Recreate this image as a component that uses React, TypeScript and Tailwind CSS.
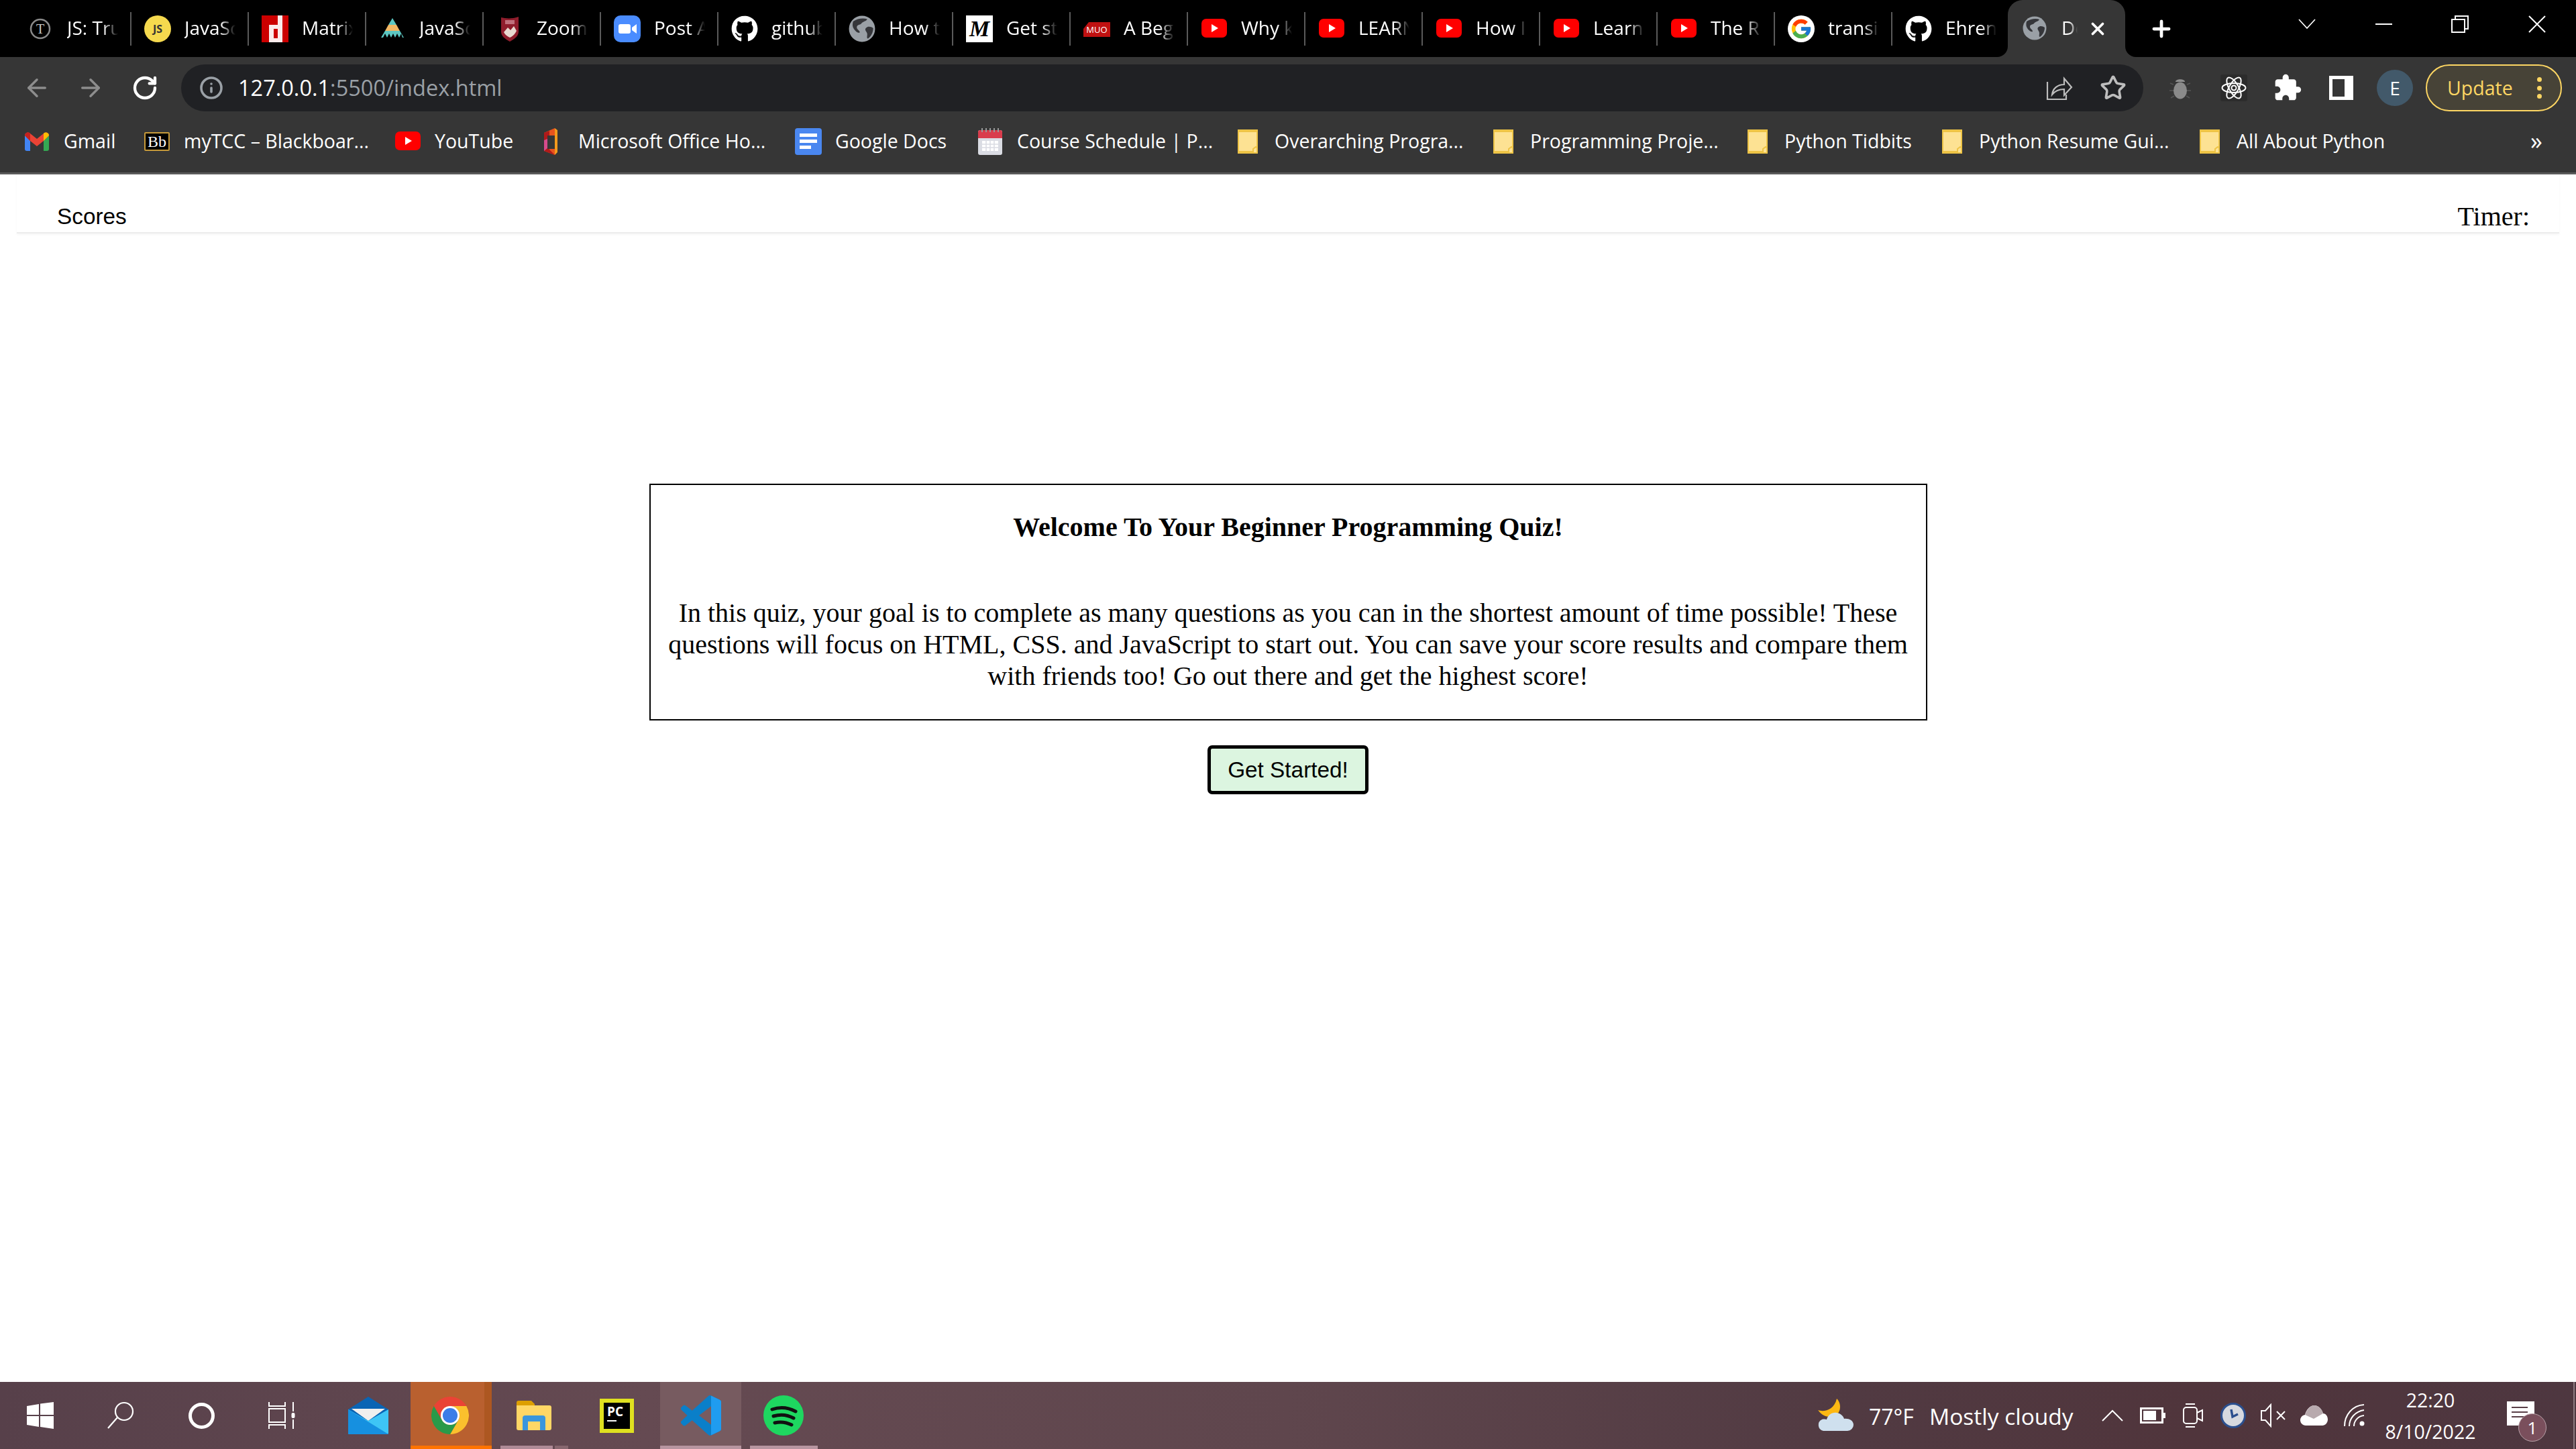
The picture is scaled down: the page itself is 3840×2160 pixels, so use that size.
import React from "react";
import { FaGithub } from "react-icons/fa";
import { MdExtension } from "react-icons/md";
import { FcGoogle } from "react-icons/fc";
import { ArrowLeft, ArrowRight, RotateCw, Info, Star, X, Plus } from "lucide-react";

const Globe = ({ size = 36 }: { size?: number }) => (
  <svg width={size} height={size} viewBox="0 0 36 36">
    <circle cx="18" cy="18" r="17.5" fill="#9aa0a6" />
    <path d="M6 8c6-4 14-5 19-3-1 3-6 3-8 6-2 2-6 1-6 5 0 3 4 4 4 7-3 1-6-2-8-5S5 12 6 8Z" fill="#35363a" />
    <path d="M33 17c-3-2-7-3-10 0-2 3 2 5 2 8 0 3-1 6 1 6 4-3 7-8 7-14Z" fill="#35363a" />
  </svg>
);

const YT = () => (
  <svg width="40" height="30" viewBox="0 0 40 30">
    <rect x="1" y="0" width="38" height="28" rx="7" fill="#ff0000" />
    <path d="M16 8l10 6-10 6Z" fill="#fff" />
  </svg>
);

const Folder = () => (
  <svg width="30" height="36" viewBox="0 0 30 36">
    <rect x="1" y="1" width="28" height="34" fill="#fde293" stroke="#eec446" strokeWidth="2" />
    <rect x="0" y="0" width="30" height="4" fill="#eec446" />
    <rect x="0" y="32" width="30" height="4" fill="#eec446" />
    <path d="M23 35v-6l4-3 2 1v8Z" fill="#fde293" stroke="#eec446" strokeWidth="2" />
  </svg>
);

const tabs: { t: string; i: React.ReactNode }[] = [
  {
    t: "JS: True or False",
    i: (
      <svg width="40" height="40" viewBox="0 0 40 40">
        <circle cx="20" cy="20" r="14" fill="none" stroke="#8a8a8a" strokeWidth="2.5" />
        <text x="20" y="27" textAnchor="middle" fontSize="20" fontFamily="Liberation Serif" fill="#c8c8c8">T</text>
      </svg>
    ),
  },
  {
    t: "JavaScript",
    i: (
      <svg width="40" height="40" viewBox="0 0 40 40">
        <circle cx="20" cy="20" r="20" fill="#f5d94e" />
        <text x="20" y="26" textAnchor="middle" fontSize="16" fontWeight="700" fontFamily="Open Sans" fill="#333">JS</text>
      </svg>
    ),
  },
  {
    t: "Matrix",
    i: (
      <svg width="40" height="40" viewBox="0 0 40 40">
        <rect width="40" height="40" fill="#cc0000" />
        <path d="M24 0h7v40H11V14h13Zm-6 20v14h6V20Z" fill="#fff" opacity="0.92" />
      </svg>
    ),
  },
  {
    t: "JavaScript",
    i: (
      <svg width="40" height="40" viewBox="0 0 40 40">
        <path d="M20 4l6 10H14Z" fill="#5cc7c2" />
        <path d="M14 14h12l5 9H9Z" fill="#f2b764" />
        <path d="M9 23h22l6 10H3Z" fill="#5cc7c2" />
        <path d="M6 33l3-6 3 6 3-6 3 6 3-6 3 6 3-6 3 6 3-6 2 6Z" fill="#000" />
      </svg>
    ),
  },
  {
    t: "Zoom",
    i: (
      <svg width="40" height="40" viewBox="0 0 40 40">
        <path d="M7 3c8 2 18 2 26-1v22c0 7-6 11-13 15C13 35 7 31 7 24Z" fill="#8f1d2c" />
        <path d="M11 25l6-7 4 4 5-6 4 7c-3 6-6 8-10 10-4-2-7-4-9-8Z" fill="#e8d9d0" />
        <rect x="13" y="7" width="14" height="6" fill="#c0707c" />
      </svg>
    ),
  },
  {
    t: "Post A",
    i: (
      <svg width="40" height="40" viewBox="0 0 40 40">
        <rect width="40" height="40" rx="10" fill="#4a8cff" />
        <rect x="7" y="13" width="18" height="14" rx="3" fill="#fff" />
        <path d="M27 18l7-5v14l-7-5Z" fill="#fff" />
      </svg>
    ),
  },
  { t: "github", i: <FaGithub size={40} color="#fff" /> },
  { t: "How to", i: <Globe size={40} /> },
  {
    t: "Get started",
    i: (
      <svg width="40" height="40" viewBox="0 0 40 40">
        <rect width="40" height="40" fill="#fff" />
        <text x="20" y="31" textAnchor="middle" fontSize="34" fontStyle="italic" fontWeight="700" fontFamily="Liberation Serif" fill="#000">M</text>
      </svg>
    ),
  },
  {
    t: "A Beginner",
    i: (
      <svg width="40" height="40" viewBox="0 0 40 40">
        <path d="M8 10h32v22H0v-12Z" fill="#bf1111" />
        <text x="20" y="26" textAnchor="middle" fontSize="13" fontFamily="Open Sans" fill="#fff">MUO</text>
      </svg>
    ),
  },
  { t: "Why k", i: <YT /> },
  { t: "LEARN", i: <YT /> },
  { t: "How I", i: <YT /> },
  { t: "Learn", i: <YT /> },
  { t: "The R", i: <YT /> },
  {
    t: "transition",
    i: (
      <span className="flex h-10 w-10 items-center justify-center rounded-full bg-white">
        <FcGoogle size={34} />
      </span>
    ),
  },
  { t: "Ehrenberg", i: <FaGithub size={40} color="#fff" /> },
];

const Gmail = () => (
  <svg width="36" height="28" viewBox="0 0 36 28">
    <path d="M0 5v20a3 3 0 0 0 3 3h5V13Z" fill="#4285f4" />
    <path d="M36 5v20a3 3 0 0 1-3 3h-5V13Z" fill="#34a853" />
    <path d="M8 13L0 5c0-4 5-6 8-3l10 8 10-8c3-3 8-1 8 3l-8 8-10 8Z" fill="#ea4335" />
    <path d="M28 2c3-3 8-1 8 3l-8 8Z" fill="#fbbc04" />
    <path d="M8 2C5-1 0 1 0 5l8 8Z" fill="#c5221f" />
  </svg>
);

const marks: { t: string; w: string; i: React.ReactNode }[] = [
  { t: "Gmail", w: "w-[179px]", i: <Gmail /> },
  {
    t: "myTCC – Blackboar...",
    w: "w-[374px]",
    i: (
      <span className="flex h-7 w-[38px] items-center justify-center rounded-[2px] border-2 border-[#c79a3a] bg-black font-['Liberation_Serif'] text-[24px] leading-none text-white">
        Bb
      </span>
    ),
  },
  { t: "YouTube", w: "w-[214px]", i: <YT /> },
  {
    t: "Microsoft Office Ho...",
    w: "w-[383px]",
    i: (
      <svg className="-translate-x-[3px]" width="32" height="40" viewBox="0 0 32 40">
        <path d="M8 7L24 0v40L8 34Z" fill="#e8541d" />
        <path d="M8 7l8-3v28l8 8-16-6Z" fill="#b01a1a" />
        <path d="M13 11h11v20H13Z" fill="#363636" />
        <path d="M8 18l5-2v14l-5 4Z" fill="#d64b8c" />
        <path d="M24 0l4 3v33l-4 4Z" fill="#f49a1c" />
      </svg>
    ),
  },
  {
    t: "Google Docs",
    w: "w-[271px]",
    i: (
      <svg width="40" height="40" viewBox="0 0 40 40">
        <rect width="40" height="40" rx="4" fill="#4a87f0" />
        <rect x="7" y="8" width="26" height="5" fill="#fff" />
        <rect x="7" y="17" width="26" height="5" fill="#fff" />
        <rect x="7" y="26" width="17" height="5" fill="#fff" />
      </svg>
    ),
  },
  {
    t: "Course Schedule | P...",
    w: "w-[384px]",
    i: (
      <svg width="36" height="40" viewBox="0 0 36 40">
        <rect y="3" width="36" height="37" rx="3" fill="#dadce3" />
        <path d="M0 6a3 3 0 0 1 3-3h30a3 3 0 0 1 3 3v9H0Z" fill="#d93c4c" />
        <path d="M6 0v6M12 0v6M18 0v6M24 0v6M30 0v6" stroke="#9a9a9a" strokeWidth="2" />
        <path d="M6 19h24v15H6Z" fill="#fff" />
        <path d="M12 19v15M18 19v15M24 19v15M6 24h24M6 29h24" stroke="#dadce3" strokeWidth="1.5" />
      </svg>
    ),
  },
  { t: "Overarching Progra...", w: "w-[381px]", i: <Folder /> },
  { t: "Programming Proje...", w: "w-[379px]", i: <Folder /> },
  { t: "Python Tidbits", w: "w-[290px]", i: <Folder /> },
  { t: "Python Resume Gui...", w: "w-[384px]", i: <Folder /> },
  { t: "All About Python", w: "w-[300px]", i: <Folder /> },
];

const Tab = ({ t, i }: { t: string; i: React.ReactNode }) => (
  <div className="flex h-full w-[175px] shrink-0 items-center">
    <div className="flex w-[40px] ml-[19px] justify-center">{i}</div>
    <div className="ml-[20px] w-[76px] -translate-y-[2px] overflow-hidden whitespace-nowrap text-[28px] leading-[36px] text-white [mask-image:linear-gradient(90deg,#000_70%,transparent_100%)]">
      {t}
    </div>
    <div className="ml-[18px] h-[50px] w-[2px] bg-[#5a5a5a]" />
  </div>
);

const Chrome = () => (
  <svg width="56" height="56" viewBox="0 0 48 48">
    <path d="M24 12H44.8A24 24 0 0 0 3.2 12L13.6 30A12 12 0 0 1 24 12Z" fill="#ea4335" />
    <path d="M44.8 12H24A12 12 0 0 1 34.4 30L24 48A24 24 0 0 0 44.8 12Z" fill="#fbc02d" />
    <path d="M3.2 12L13.6 30A12 12 0 0 0 34.4 30L24 48A24 24 0 0 1 3.2 12Z" fill="#2a9a49" />
    <circle cx="24" cy="24" r="12" fill="#fff" />
    <circle cx="24" cy="24" r="9.5" fill="#3b7de8" />
  </svg>
);

export default function App() {
  return (
    <div className="flex h-[2160px] w-[3840px] flex-col overflow-hidden bg-white font-['Open_Sans',sans-serif]">
      {/* title bar */}
      <div className="flex h-[85px] shrink-0 bg-black pl-[21px]">
        {tabs.map((x, n) => (
          <Tab key={n} t={x.t} i={x.i} />
        ))}
        <div className="relative ml-[-3px] flex h-full w-[175px] shrink-0 items-center rounded-t-[22px] bg-[#363636]">
          <svg className="absolute bottom-0 left-[-16px]" width="16" height="16" viewBox="0 0 16 16">
            <path d="M16 0A16 16 0 0 1 0 16H16Z" fill="#363636" />
          </svg>
          <svg className="absolute bottom-0 right-[-16px]" width="16" height="16" viewBox="0 0 16 16">
            <path d="M0 0A16 16 0 0 0 16 16H0Z" fill="#363636" />
          </svg>
          <div className="ml-[22px] -translate-y-[1px]">
            <Globe size={36} />
          </div>
          <div className="ml-[22px] w-[24px] -translate-y-[2px] overflow-hidden text-[28px] leading-[36px] text-white [mask-image:linear-gradient(90deg,#000_50%,transparent_100%)]">
            Document
          </div>
          <X className="ml-[15px] text-white" size={30} strokeWidth={3} />
        </div>
        <div className="ml-[14px] flex w-[80px] items-center justify-center">
          <Plus className="text-white" size={38} strokeWidth={3} />
        </div>
        <div className="flex-1" />
        <div className="flex h-[72px] w-[115px] items-center justify-center">
          <svg width="26" height="16" viewBox="0 0 26 16"><path d="M1 1l12 13L25 1" fill="none" stroke="#fff" strokeWidth="1.7" /></svg>
        </div>
        <div className="flex h-[72px] w-[114px] items-center justify-center">
          <div className="h-[2px] w-[25px] bg-white" />
        </div>
        <div className="flex h-[72px] w-[114px] items-center justify-center">
          <svg width="26" height="26" viewBox="0 0 26 26">
            <rect x="1" y="6" width="19" height="19" fill="none" stroke="#fff" strokeWidth="2" />
            <path d="M6 5V1h19v19h-4" fill="none" stroke="#fff" strokeWidth="2" />
          </svg>
        </div>
        <div className="flex h-[72px] w-[116px] items-center justify-center">
          <svg width="26" height="26" viewBox="0 0 26 26"><path d="M1 1l24 24M25 1L1 25" stroke="#fff" strokeWidth="2" /></svg>
        </div>
      </div>

      {/* toolbar */}
      <div className="flex h-[92px] shrink-0 items-start bg-[#363636] pt-[11px] pr-[21px]">
        <div className="ml-[15px] flex h-[70px] w-[80px] items-center justify-center">
          <ArrowLeft size={42} strokeWidth={2} className="text-[#8d8d8d]" />
        </div>
        <div className="flex h-[70px] w-[80px] items-center justify-center">
          <ArrowRight size={42} strokeWidth={2} className="text-[#8d8d8d]" />
        </div>
        <div className="flex h-[70px] w-[82px] items-center justify-center">
          <RotateCw size={40} strokeWidth={2.6} className="text-white" />
        </div>
        <div className="ml-[13px] flex h-[70px] flex-1 items-center rounded-full bg-[#202124] pr-[5px]">
          <Info size={36} strokeWidth={2.4} className="ml-[27px] text-[#9aa0a6]" />
          <div className="ml-[22px] text-[32.5px] leading-none whitespace-nowrap text-white">
            127.0.0.1<span className="text-[#9aa0a6]">:5500/index.html</span>
          </div>
          <div className="flex-1" />
          <div className="flex w-[80px] items-center justify-center">
            <svg width="40" height="38" viewBox="0 0 40 38" fill="none" stroke="#bdbdbd" strokeWidth="2.2">
              <path d="M2 10v26h28v-7" />
              <path d="M9 29c1-9 8-15 18-15V5l11 13-11 12v-9c-8 0-14 3-18 8Z" />
            </svg>
          </div>
          <div className="flex w-[80px] items-center justify-center">
            <Star size={40} strokeWidth={2.2} className="text-[#bdbdbd]" />
          </div>
        </div>
        <div className="ml-[15px] flex h-[70px] w-[80px] items-center justify-center">
          <svg width="34" height="34" viewBox="0 0 34 34">
            <path d="M10 8c0-5 14-5 14 0Z" fill="#8f8f8f" />
            <ellipse cx="17" cy="21" rx="10" ry="12.5" fill="#8a8a8a" />
            <path d="M7 12l-5-2M7 21H1M8 29l-5 3M27 12l5-2M27 21h6M26 29l5 3" stroke="#555" strokeWidth="1.5" />
          </svg>
        </div>
        <div className="flex h-[70px] w-[80px] items-center justify-center">
          <div className="flex h-10 w-10 items-center justify-center rounded-[3px] bg-[#2c2c2c]">
            <svg width="38" height="36" viewBox="0 0 38 36" fill="none" stroke="#fff" strokeWidth="2">
              <ellipse cx="19" cy="18" rx="17.5" ry="7" />
              <ellipse cx="19" cy="18" rx="17.5" ry="7" transform="rotate(60 19 18)" />
              <ellipse cx="19" cy="18" rx="17.5" ry="7" transform="rotate(120 19 18)" />
              <circle cx="19" cy="18" r="3.5" />
            </svg>
          </div>
        </div>
        <div className="flex h-[70px] w-[80px] items-center justify-center">
          <MdExtension size={44} color="#fff" />
        </div>
        <div className="flex h-[70px] w-[80px] items-center justify-center">
          <div className="h-9 w-9 border-y-[5px] border-r-[13px] border-l-[5px] border-white" />
        </div>
        <div className="flex h-[70px] w-[80px] items-center justify-center">
          <div className="flex h-[54px] w-[54px] items-center justify-center rounded-full bg-[#42596a] text-[28px] leading-none text-white">
            E
          </div>
        </div>
        <div className="ml-[6px] flex h-[70px] w-[203px] items-center rounded-full border-[2.5px] border-[#fdd663] bg-[#474337] pl-[30px]">
          <span className="text-[28.5px] leading-none text-[#fdd663]">Update</span>
          <div className="ml-[36px] flex flex-col gap-[5.5px]">
            <div className="h-[7px] w-[7px] rounded-full bg-[#fdd663]" />
            <div className="h-[7px] w-[7px] rounded-full bg-[#fdd663]" />
            <div className="h-[7px] w-[7px] rounded-full bg-[#fdd663]" />
          </div>
        </div>
      </div>

      {/* bookmarks */}
      <div className="flex h-[83px] shrink-0 items-start border-b-[3px] border-[#5a5a5a] bg-[#363636] pl-[35px]">
        <div className="flex h-[66px] items-center">
          {marks.map((m, n) => (
            <div key={n} className={`flex shrink-0 items-center ${m.w}`}>
              <div className="mr-[20px] flex w-[40px] translate-y-[1px] justify-center">{m.i}</div>
              <span className="text-[28.5px] leading-none whitespace-nowrap text-white">{m.t}</span>
            </div>
          ))}
        </div>
        <div className="ml-[198px] flex h-[66px] items-center text-[36px] leading-none text-white">»</div>
      </div>

      {/* page */}
      <div className="flex flex-1 flex-col items-center">
        <div className="mx-[27px] flex h-[88px] w-[3790px] shrink-0 items-start justify-between border-b-2 border-[#ececec] pt-[39px] pr-[44px] pl-[60px] shadow-[0_2px_3px_rgba(0,0,0,0.04)]">
          <button className="h-[48px] font-['Liberation_Sans',sans-serif] text-[33.33px] leading-[48px] text-black">Scores</button>
          <div className="font-['Liberation_Serif',serif] text-[40px] leading-[48px] text-black">Timer:</div>
        </div>
        <div className="mt-[373px] w-[1905px] border-2 border-black px-[26px] pt-[39px] pb-[41px] text-center font-['Liberation_Serif',serif] text-[40px] leading-[47px] text-black">
          <div className="font-bold">Welcome To Your Beginner Programming Quiz!</div>
          <p className="mt-[81px]">
            In this quiz, your goal is to complete as many questions as you can in the shortest amount of time possible! These questions will focus on HTML, CSS. and JavaScript to start out. You can save your score results and compare them with friends too! Go out there and get the highest score!
          </p>
        </div>
        <button className="mt-[37px] flex h-[73px] w-[240px] items-center justify-center rounded-[7px] border-[5px] border-black bg-[#dcf5e0] font-['Liberation_Sans',sans-serif] text-[33.33px] leading-none text-black">
          Get Started!
        </button>
      </div>

      {/* taskbar */}
      <div className="flex h-[100px] shrink-0 items-center bg-[linear-gradient(90deg,#57404a_0%,#654a52_25%,#5f464d_50%,#513a42_72%,#50353c_85%,#4e3740_100%)]">
        <div className="flex h-full w-[120px] items-center justify-center">
          <svg width="40" height="40" viewBox="0 0 40 40" fill="#fff">
            <path d="M0 6l18-3v16H0ZM20 2.6L40 0v19H20ZM0 21h18v16L0 34ZM20 21h20v19l-20-3Z" />
          </svg>
        </div>
        <div className="flex h-full w-[120px] items-center justify-center">
          <svg width="42" height="42" viewBox="0 0 42 42" fill="none" stroke="#fff" strokeWidth="2.2">
            <circle cx="26" cy="15" r="13" />
            <path d="M16 24L2 40" />
          </svg>
        </div>
        <div className="flex h-full w-[120px] items-center justify-center">
          <div className="h-[39px] w-[39px] rounded-full border-[5px] border-white" />
        </div>
        <div className="flex h-full w-[120px] items-center justify-center">
          <svg width="40" height="40" viewBox="0 0 40 40" fill="none" stroke="#fff" strokeWidth="2">
            <path d="M1 0v6h24V0M1 40v-6h24v6" />
            <rect x="1" y="10" width="24" height="20" />
            <path d="M37 0v14M37 26v14" />
            <rect x="34.5" y="16" width="5" height="8" fill="#fff" stroke="none" rx="2" />
          </svg>
        </div>
        <div className="ml-[6px] flex h-full w-[126px] items-center justify-center">
          <svg width="60" height="56" viewBox="0 0 60 56">
            <path d="M30 0L60 19V56H0V19Z" fill="#0a64b4" />
            <path d="M5 18h50L30 36Z" fill="#f0efee" />
            <path d="M0 19L30 36 60 19V54a2 2 0 0 1-2 2H2a2 2 0 0 1-2-2Z" fill="#3ec5f5" />
            <path d="M0 19L60 56H2a2 2 0 0 1-2-2Z" fill="#1690e0" />
          </svg>
        </div>
        <div className="relative flex h-full w-[121px] items-center justify-center bg-[#b9602f]">
          <div className="-translate-x-[2px]"><Chrome /></div>
          <div className="absolute top-0 right-0 h-full w-[11px] bg-[#ad5721]" />
          <div className="absolute inset-x-0 bottom-0 h-[5px] bg-[#ff7300]" />
        </div>
        <div className="relative flex h-full w-[126px] items-center justify-center">
          <svg width="52" height="44" viewBox="0 0 52 44">
            <path d="M0 3a3 3 0 0 1 3-3h19l5 5v6H0Z" fill="#dd9f00" />
            <path d="M0 7h49a3 3 0 0 1 3 3v31a3 3 0 0 1-3 3H3a3 3 0 0 1-3-3Z" fill="#ffd766" />
            <path d="M9 44V26a4 4 0 0 1 4-4h26a4 4 0 0 1 4 4v18h-8V31H17v13Z" fill="#3a96dd" />
          </svg>
          <div className="absolute bottom-0 left-[13px] h-[5px] w-[78px] bg-[#ae8a96]" />
          <div className="absolute bottom-0 left-[94px] h-[5px] w-[20px] bg-[#87676f]" />
        </div>
        <div className="flex h-full w-[125px] items-center justify-center">
          <div className="flex h-[51px] w-[51px] -translate-x-[2px] flex-col items-start border-[6px] border-[#dfe020] bg-black pl-[5px] pt-[3px] font-['Open_Sans',sans-serif] text-[19px] leading-[20px] font-bold text-white">
            PC
            <div className="mt-[3px] h-[2px] w-[14px] bg-white" />
          </div>
        </div>
        <div className="relative flex h-full w-[121px] items-center justify-center bg-[#775b60]">
          <svg width="60" height="60" viewBox="0 0 100 100">
            <path fillRule="evenodd" d="M96 11L75 1a6 6 0 0 0-7 1L28 38 11 25a4 4 0 0 0-5 0L1 30a4 4 0 0 0 0 6L16 50 1 64a4 4 0 0 0 0 6l5 5a4 4 0 0 0 5 0L28 62 68 98a6 6 0 0 0 7 1l21-10a6 6 0 0 0 4-6V17a6 6 0 0 0-4-6ZM75 27L45 50 75 73Z" fill="#0a7fc9" />
            <path d="M75 1L96 11a6 6 0 0 1 4 6V83a6 6 0 0 1-4 6L75 99Z" fill="#1f9cf0" />
          </svg>
          <div className="absolute inset-x-0 bottom-0 h-[5px] bg-[#b795a0]" />
        </div>
        <div className="relative flex h-full w-[125px] items-center justify-center">
          <svg width="60" height="60" viewBox="0 0 60 60">
            <circle cx="30" cy="30" r="30" fill="#1ed760" />
            <path d="M13 21c11-4 24-3 35 3M15 31c10-3 21-2 30 3M17 41c8-2 17-1 25 3" fill="none" stroke="#111" strokeWidth="5" strokeLinecap="round" />
          </svg>
          <div className="absolute bottom-0 left-[13px] h-[5px] w-[101px] bg-[#b795a0]" />
        </div>
        <div className="flex-1" />
        <div className="flex h-full w-[72px] items-center justify-center">
          <svg width="56" height="50" viewBox="0 0 56 50">
            <path d="M30 0c9 8 6 28-10 27-6 0-12-2-18-10 8 3 24 1 28-17Z" fill="#fdb813" />
            <path d="M10 48a9 9 0 0 1-2-17c3-1 6 0 7 0 2-7 8-11 15-10 6 1 10 5 11 9 6-1 14 2 14 9a9 9 0 0 1-9 9Z" fill="#cfe0ee" />
          </svg>
        </div>
        <div className="ml-[14px] w-[90px] translate-y-[2px] text-[32px] leading-none text-white">77°F</div>
        <div className="w-[240px] translate-y-[2px] text-[33.5px] leading-none whitespace-nowrap text-white">Mostly cloudy</div>
        <div className="ml-[3px] flex h-full w-[60px] items-center justify-center">
          <svg width="32" height="18" viewBox="0 0 32 18"><path d="M1 17L16 2l15 15" fill="none" stroke="#fff" strokeWidth="2" /></svg>
        </div>
        <div className="flex h-full w-[60px] items-center justify-center">
          <svg width="38" height="24" viewBox="0 0 38 24">
            <rect x="1.5" y="1.5" width="32" height="21" fill="none" stroke="#fff" strokeWidth="3" />
            <rect x="5" y="5" width="19" height="14" fill="#fff" />
            <rect x="35" y="8" width="3" height="8" fill="#fff" />
          </svg>
        </div>
        <div className="flex h-full w-[60px] items-center justify-center">
          <svg width="30" height="36" viewBox="0 0 30 36" fill="none" stroke="#fff" strokeWidth="2">
            <path d="M4 1h14M4 35h14" />
            <rect x="1" y="6" width="20" height="24" rx="4" />
            <path d="M21 14l8-4v16l-8-4" />
          </svg>
        </div>
        <div className="flex h-full w-[60px] items-center justify-center">
          <svg width="38" height="38" viewBox="0 0 38 38">
            <circle cx="19" cy="19" r="17.5" fill="#d6d9df" stroke="#2b4f8e" strokeWidth="3" />
            <path d="M16 10l2 11 8-4" fill="none" stroke="#2b4f8e" strokeWidth="3.5" />
          </svg>
        </div>
        <div className="flex h-full w-[60px] items-center justify-center">
          <svg width="38" height="36" viewBox="0 0 38 36" fill="none" stroke="#fff" strokeWidth="2">
            <path d="M1 11h6l8-9v32l-8-9H1Z" />
            <path d="M24 12l12 12M36 12L24 24" />
          </svg>
        </div>
        <div className="flex h-full w-[60px] items-center justify-center">
          <svg width="42" height="34" viewBox="0 0 42 34">
            <path d="M10 32a8 8 0 0 1-2-16c2-8 8-14 14-14s11 5 13 12c4 0 7 4 7 9s-4 9-8 9Z" fill="#fff" />
            <path d="M8 16c3-8 8-14 14-14s11 5 13 12L21 22Z" fill="#b8aaae" />
          </svg>
        </div>
        <div className="flex h-full w-[60px] items-center justify-center">
          <svg width="32" height="34" viewBox="0 0 32 34" fill="none" stroke="#fff" strokeWidth="2">
            <path d="M2 33C2 16 14 2 31 1" />
            <path d="M9 33c0-12 9-22 22-24" />
            <path d="M16 33c0-8 6-15 15-16" />
            <circle cx="28" cy="29" r="3.5" fill="#fff" stroke="none" />
          </svg>
        </div>
        <div className="flex h-full w-[168px] flex-col items-center justify-center gap-[17px] text-[28.5px] leading-[30px] text-white">
          <div>22:20</div>
          <div>8/10/2022</div>
        </div>
        <div className="relative flex h-full w-[100px] items-center justify-center">
          <div className="flex h-[36px] w-[41px] -translate-y-[3px] flex-col gap-[5px] bg-white px-[7px] pt-[8px]">
            <div className="h-[2px] w-[24px] bg-[#5a3f48]" />
            <div className="h-[2px] w-[24px] bg-[#5a3f48]" />
            <div className="h-[2px] w-[24px] bg-[#5a3f48]" />
          </div>
          <div className="absolute top-[47px] left-[47px] flex h-[42px] w-[42px] items-center justify-center rounded-full border border-[#b7a0a7] bg-[#7a4f5c] text-[26px] leading-none text-white">
            1
          </div>
        </div>
        <div className="h-full w-[29px]" />
        <div className="h-full w-[2px] bg-[#8b7a80]" />
        <div className="h-full w-[2px]" />
      </div>
    </div>
  );
}
